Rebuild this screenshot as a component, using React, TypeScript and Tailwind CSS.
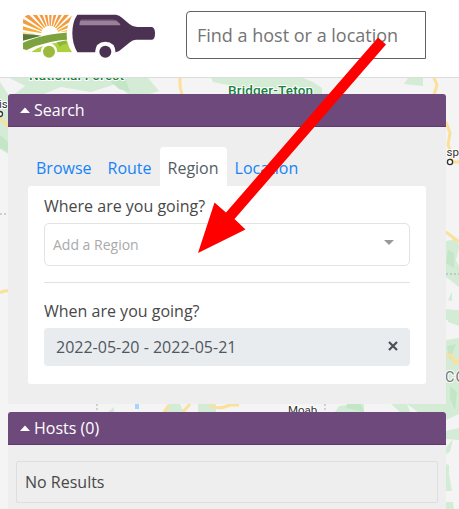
const TABS = ["Browse", "Route", "Region", "Location"];

const Logo = () => (
  <svg className="h-[50px] w-[136px]" viewBox="36 40 408 150">
    <defs>
      <clipPath id="camper">
        <path d="M60 45H187Q170 80 170 105Q170 135 186 158H67L39 148V66Q39 45 60 45Z" />
      </clipPath>
      <linearGradient id="sun" x1="0" y1="0" x2="0" y2="1">
        <stop offset="0.2" stopColor="#f39a40" />
        <stop offset="0.5" stopColor="#fbb52c" />
      </linearGradient>
    </defs>
    <g clipPath="url(#camper)">
      {/* Sun rays */}
      <circle
        cx="120"
        cy="105"
        r="60"
        fill="none"
        stroke="url(#sun)"
        strokeWidth="120"
        pathLength="28"
        strokeDasharray="0.6 0.4"
        strokeDashoffset="0.3"
      />
      <circle cx="119" cy="104" r="26" fill="#fff" />
      {/* Fields */}
      <path d="M30 102Q70 101 119 99L190 94V170H30Z" fill="#fff" />
      <path d="M36 103Q70 104 94 108L36 124Z" fill="#587c36" />
      <path d="M36 131Q90 104 190 97V119Q110 122 50 151L36 150Z" fill="#7da33f" />
      <path d="M60 160Q84 141 120 132L190 123V160Z" fill="#add13e" />
      <path d="M140 128L170 122V133Q156 133 150 142Z" fill="#8fb63c" />
    </g>
    <circle cx="117" cy="156" r="25" fill="#fff" />
    <circle cx="117" cy="156" r="18" fill="#9dba3c" />
    <path
      d="M202 45H318Q328 46 336 54L358 73Q368 82 382 82H426Q435 84 435 102Q435 119 426 120H378Q368 120 358 129L334 149Q326 157 318 158H202Q187 133 187 101Q187 66 202 45Z"
      fill="#4b3152"
    />
    <path d="M213 60H309Q325 60 332 77H208Q208 65 213 60Z" fill="#9a8099" />
    <path d="M213 62H309Q322 62 327 70" fill="none" stroke="#765a77" strokeWidth="3" />
    <path d="M255 159Q257 126 286 126Q315 126 317 159Z" fill="#fff" />
    <circle cx="286" cy="156" r="24" fill="#fff" />
    <circle cx="286" cy="156" r="18" fill="#4b3152" />
  </svg>
);

const MapBackground = () => (
  <svg
    className="absolute inset-0 h-[509px] w-[459px] font-['Roboto',sans-serif]"
    viewBox="0 0 459 509"
  >
    <rect width="459" height="509" fill="#f4f4f4" />
    {/* Forests */}
    <g fill="#d4ecd6">
      <path d="M9 78H40L48 84L34 94H14L25 86Z" />
      <path d="M36 78H148L159 91L150 94H128L116 84L91 92L61 87L44 94H30Z" />
      <path d="M211 78H303L313 82L322 88V94H248L232 86L213 82Z" />
      <path d="M408 78H423V86L413 85L404 84Z" />
      <path d="M0 82L8 92V154L0 149Z" />
      <path d="M446 241L456 239L459 245V287L446 277Z" />
      <path d="M448 300L452 292V301ZM446 309L456 310L459 320H446Z" />
      <path d="M446 310H459V326L448 322ZM446 340L459 338V440L446 439Z" />
      <path d="M446 448L453 439L450 452L446 454ZM446 464L449 465V474L452 491H446ZM446 502H453L454 509H446Z" />
      <path d="M164 412L169 404H180L184 412ZM198 404H216V412H198ZM335 412L339 406L353 404H364V412ZM391 404H446V412H400ZM108 412L114 407V412Z" />
    </g>
    <g fill="#c3e6c7">
      <path d="M0 135L8 142V152L0 148ZM110 81L125 78L130 92L119 89ZM347 404H361L364 412L346 408Z" />
      <path d="M448 250L454 253V268L446 263ZM447 346L456 344L450 360ZM450 386L457 392L455 410L450 398Z" />
    </g>
    <g fill="#f4f4f4">
      <path d="M0 78H9L25 86L14 94H8L0 82ZM459 248L456 260L459 266Z" />
      <path d="M446 420L459 414V428L446 431ZM407 404L418 412H410Z" />
    </g>
    {/* Roads */}
    <g fill="none" stroke="#fbe09a" strokeWidth="3">
      <path d="M180 78V86L182 95M434 78L437 85L434 95M446 122L450 133L448 145L452 154V162H459" />
      <path d="M0 118L9 127M0 293Q4 290 9 291M446 232L459 242M446 355H451L455 363L459 359" />
      <path d="M164 412L169 405M183 412L190 404M210 404Q215 411 230 405H239" />
    </g>
    <path
      d="M0 214H8M446 274H459M97 404V412M325 404V412"
      fill="none"
      stroke="#aaa"
      strokeDasharray="2 2"
    />
    <rect x="135" y="404" width="4" height="5" fill="#a6d6ff" />
    {/* Place names */}
    <g
      className="font-medium"
      fill="#198242"
      stroke="#fff"
      strokeWidth="2"
      paintOrder="stroke"
      fontSize="13.5"
    >
      <text x="29" y="79.5" textLength="95">
        National Forest
      </text>
      <text x="228" y="95" textLength="85">
        Bridger-Teton
      </text>
    </g>
    <g fill="#333" fontSize="11.5" stroke="#fff" strokeWidth="2" paintOrder="stroke">
      <text x="-1" y="108">is</text>
      <text x="446.5" y="156">sp</text>
      <text x="288" y="414">Moab</text>
    </g>
    <text
      x="445"
      y="381.5"
      fill="#777"
      fontSize="14.5"
      stroke="#fff"
      strokeWidth="2"
      paintOrder="stroke"
      letterSpacing="1"
    >
      CO
    </text>
    <g fill="#fff" stroke="#333" strokeWidth="1.3">
      <circle cx="450" cy="162" r="2.6" />
      <circle cx="0" cy="114" r="2.5" />
    </g>
  </svg>
);

const PanelHeader = ({ title }: { title: string }) => (
  <div className="flex h-[33px] items-center rounded-t-[3px] border-b border-[#5d3a6b] bg-[#6e4a7c] pl-3 text-white">
    <svg className="mr-1 h-[6px] w-[10px]" viewBox="0 0 10 6">
      <path d="M0 6L5 0.5L10 6Z" fill="#fff" />
    </svg>
    {title}
  </div>
);

const Arrow = () => (
  <svg
    className="pointer-events-none absolute inset-0 h-[509px] w-[459px]"
    viewBox="0 0 459 509"
  >
    <path
      d="M378 37.5L386 44.5L234.5 219L245.5 229.5L198 253L214.5 202.5L226 212.5Z"
      fill="#f00"
    />
  </svg>
);

export default function App() {
  return (
    <div className="relative h-[509px] w-[459px] overflow-hidden font-['Open_Sans','Noto_Sans',sans-serif] text-base leading-6 text-[#484848]">
      <MapBackground />

      <div className="relative">
        {/* Header */}
        <header className="flex h-[78px] items-start border-b border-[#dcdcdc] bg-white pt-[11px] pl-[22px]">
          <div className="pt-[2px]">
            <Logo />
          </div>
          <div className="ml-7 flex h-12 w-60 items-center rounded-l-[4px] border border-[#626262] pl-[10px] text-[18px] text-[#747474]">
            Find a host or a location
          </div>
        </header>

        <main className="mt-4 ml-2 w-[438px]">
          {/* Search */}
          <section>
            <PanelHeader title="Search" />
            <div className="h-[277px] bg-[#eee] px-5 pt-5">
              <nav className="flex h-[39px]">
                {TABS.map((tab) => (
                  <button
                    key={tab}
                    className={`flex items-center rounded-t-[4px] px-2 pt-[2px] ${
                      tab === "Region"
                        ? "bg-white text-[#555d65]"
                        : "text-[#1684f8]"
                    }`}
                  >
                    {tab}
                  </button>
                ))}
              </nav>
              <div className="h-[198px] w-[398px] rounded-[3px] bg-white px-4 pt-2">
                <div>Where are you going?</div>
                <div className="mt-[5px] flex h-[43px] items-center justify-between rounded-[5px] border border-[#e3e3e3] pr-[15px] pl-2 text-sm text-[#aaa]">
                  Add a Region
                  <svg className="mb-1 h-[5px] w-[10px]" viewBox="0 0 10 5">
                    <path d="M0 0H10L5 5Z" fill="#999" />
                  </svg>
                </div>
                <hr className="mt-4 border-[#e2e2e2]" />
                <div className="mt-4">When are you going?</div>
                <div className="mt-[5px] flex h-[38px] items-center justify-between rounded-[4px] bg-[#e9ecef] pr-3 pl-3 text-[#505760]">
                  2022-05-20 - 2022-05-21
                  <svg className="mb-[2px] h-[10px] w-[10px]" viewBox="0 0 10 10">
                    <path d="M1 1L9 9M9 1L1 9" stroke="#495057" strokeWidth="2.2" />
                  </svg>
                </div>
              </div>
            </div>
          </section>

          {/* Hosts */}
          <section className="mt-2">
            <PanelHeader title="Hosts (0)" />
            <div className="h-16 bg-[#eee] px-2 pt-4">
              <div className="flex h-[42px] items-center rounded-[2px] border border-[#dedede] pl-2">
                No Results
              </div>
            </div>
          </section>
        </main>
      </div>

      <Arrow />
    </div>
  );
}
